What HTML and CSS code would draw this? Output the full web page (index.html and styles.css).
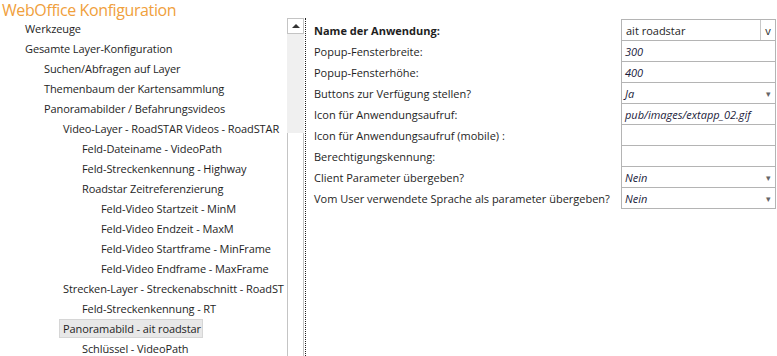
FILE: index.html
```html
<!DOCTYPE html>
<html lang="de">
<head>
    <meta charset="UTF-8">
    <title>WebOffice Konfiguration</title>
    <link rel="stylesheet" href="styles.css">
</head>
<body>
    <h1 class="title">WebOffice Konfiguration</h1>
    <div class="main">
        <div class="tree">
            <div class="node lv1"><span>Werkzeuge</span></div>
            <div class="node lv1"><span>Gesamte Layer-Konfiguration</span></div>
            <div class="node lv2"><span>Suchen/Abfragen auf Layer</span></div>
            <div class="node lv2"><span>Themenbaum der Kartensammlung</span></div>
            <div class="node lv2"><span>Panoramabilder / Befahrungsvideos</span></div>
            <div class="node lv3"><span>Video-Layer - RoadSTAR Videos - RoadSTAR</span></div>
            <div class="node lv4"><span>Feld-Dateiname - VideoPath</span></div>
            <div class="node lv4"><span>Feld-Streckenkennung - Highway</span></div>
            <div class="node lv4"><span>Roadstar Zeitreferenzierung</span></div>
            <div class="node lv5"><span>Feld-Video Startzeit - MinM</span></div>
            <div class="node lv5"><span>Feld-Video Endzeit - MaxM</span></div>
            <div class="node lv5"><span>Feld-Video Startframe - MinFrame</span></div>
            <div class="node lv5"><span>Feld-Video Endframe - MaxFrame</span></div>
            <div class="node lv3"><span>Strecken-Layer - Streckenabschnitt - RoadST</span></div>
            <div class="node lv4"><span>Feld-Streckenkennung - RT</span></div>
            <div class="node lv3 selected"><span>Panoramabild - ait roadstar</span></div>
            <div class="node lv4"><span>Schlüssel - VideoPath</span></div>
        </div>
        <div class="scrollbar">
            <div class="scroll-up"><span class="arrow-up"></span></div>
            <div class="scroll-track"></div>
            <div class="scroll-thumb"></div>
        </div>
        <div class="splitter"></div>
        <div class="props">
            <div class="row">
                <label class="bold">Name der Anwendung:</label>
                <div class="field combo"><span class="val">ait roadstar</span><span class="combo-btn">v</span></div>
            </div>
            <div class="row">
                <label>Popup-Fensterbreite:</label>
                <div class="field"><span class="val italic">300</span></div>
            </div>
            <div class="row">
                <label>Popup-Fensterhöhe:</label>
                <div class="field"><span class="val italic">400</span></div>
            </div>
            <div class="row">
                <label>Buttons zur Verfügung stellen?</label>
                <div class="field"><span class="val italic">Ja</span><span class="drop">&#9662;</span></div>
            </div>
            <div class="row">
                <label>Icon für Anwendungsaufruf:</label>
                <div class="field"><span class="val italic">pub/images/extapp_02.gif</span></div>
            </div>
            <div class="row">
                <label>Icon für Anwendungsaufruf (mobile) :</label>
                <div class="field"></div>
            </div>
            <div class="row">
                <label>Berechtigungskennung:</label>
                <div class="field"></div>
            </div>
            <div class="row">
                <label>Client Parameter übergeben?</label>
                <div class="field"><span class="val italic">Nein</span><span class="drop">&#9662;</span></div>
            </div>
            <div class="row last">
                <label>Vom User verwendete Sprache als parameter übergeben?</label>
                <div class="field"><span class="val italic">Nein</span><span class="drop">&#9662;</span></div>
            </div>
        </div>
    </div>
</body>
</html>
```

FILE: styles.css
```css
body {
    margin: 0;
    padding: 0;
    background-color: #fff;
    font-family: "Open Sans", "Noto Sans", sans-serif;
    font-size: 11px;
    color: #1e1e1e;
    overflow: hidden;
}
.title {
    margin: 0;
    padding-left: 2px;
    height: 18px;
    line-height: 21px;
    font-size: 16px;
    font-weight: normal;
    letter-spacing: -0.4px;
    color: #f0a03c;
}
.main {
    display: flex;
    height: 338px;
}
.tree {
    width: 287px;
    overflow: hidden;
}
.node {
    height: 20px;
    display: flex;
    align-items: center;
    white-space: nowrap;
    letter-spacing: -0.1px;
}
.node span {
    padding: 1px 3px 1px 3px;
    border: 1px solid transparent;
}
.lv1 span { margin-left: 21px; }
.lv2 span { margin-left: 40px; }
.lv3 span { margin-left: 59px; }
.lv4 span { margin-left: 78px; }
.lv5 span { margin-left: 97px; }
.selected span {
    padding-right: 1px;
    background-color: #e8e8e8;
    border-color: #d6d6d6;
}
.scrollbar {
    width: 17px;
    display: flex;
    flex-direction: column;
}
.scroll-up {
    height: 16px;
    border: 1px solid #c4c4c4;
    box-sizing: border-box;
    display: flex;
    align-items: center;
    justify-content: center;
    background-color: #fff;
}
.arrow-up {
    width: 0;
    height: 0;
    border-left: 4px solid transparent;
    border-right: 4px solid transparent;
    border-bottom: 4px solid #333;
}
.scroll-track {
    height: 99px;
    background-color: #f0f0f0;
}
.scroll-thumb {
    flex: 1;
    border-left: 1px solid #c4c4c4;
    border-right: 1px solid #c4c4c4;
    background-color: #fff;
}
.splitter {
    width: 1px;
    margin-left: 1px;
    border-left: 1px dotted #222;
}
.props {
    flex: 1;
    padding-top: 1px;
    padding-left: 7px;
}
.row {
    display: flex;
    height: 21px;
}
.row label {
    flex: 1;
    display: flex;
    align-items: center;
    padding-top: 1px;
}
.bold {
    font-weight: bold;
}
.field {
    width: 155px;
    height: 22px;
    box-sizing: border-box;
    border: 1px solid #b4b4b4;
    display: flex;
    align-items: center;
    margin-right: 1px;
}
.val {
    flex: 1;
    padding-left: 3px;
    white-space: nowrap;
    overflow: hidden;
}
.italic {
    font-style: italic;
    color: #1a1a3a;
}
.combo .val {
    padding-left: 4px;
}
.combo-btn {
    width: 14px;
    height: 100%;
    border-left: 1px solid #c8c8c8;
    display: flex;
    align-items: center;
    justify-content: center;
    font-size: 11px;
}
.drop {
    width: 14px;
    font-size: 9px;
    color: #666;
    text-align: center;
}
```
